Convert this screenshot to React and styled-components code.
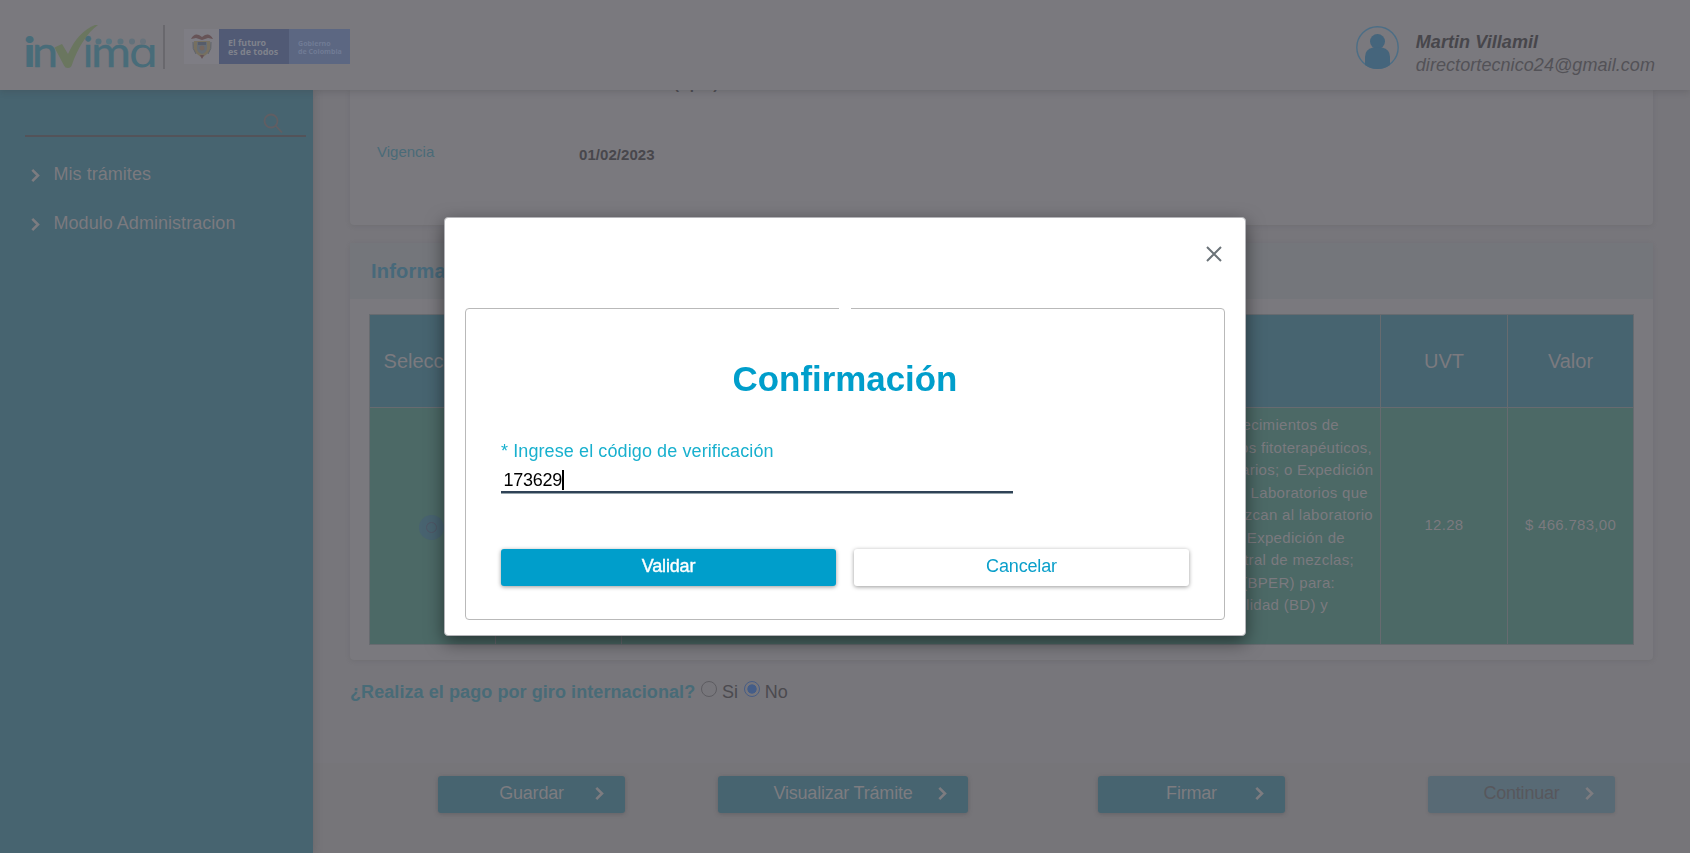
import React from "react";
import styled, { createGlobalStyle, css } from "styled-components";

const Global = createGlobalStyle`
  * { box-sizing: border-box; }
  html, body, #root { height: 100%; }
  body {
    margin: 0;
    overflow: hidden;
    background: #77767b;
    font-family: "Liberation Sans", Arial, sans-serif;
    font-size: 18px;
    color: #4b4a4f;
  }
`;

const Page = styled.div`
  height: 853px;
  display: flex;
  flex-direction: column;
`;

const Header = styled.header`
  height: 90px;
  flex: none;
  display: flex;
  justify-content: space-between;
  background: #7a797e;
  box-shadow: 0 2px 6px rgba(60, 60, 65, 0.22);
  z-index: 2;
`;

const Brand = styled.div`
  display: flex;
  align-items: flex-start;
  padding: 25px 0 0 26px;
`;

const LogoSvg = styled.svg`
  flex: none;
  margin: -15px -4px -10px;
`;

const BrandDivider = styled.div`
  width: 2px;
  height: 44px;
  margin: 0 19px 0 8px;
  background: #69686d;
`;

const GovBadge = styled.div`
  display: flex;
  height: 35px;
  margin-top: 4px;
  font-family: "Noto Sans", sans-serif;
`;

const Crest = styled.div`
  width: 35px;
  background: #7e7d84;
  display: flex;
  justify-content: center;
  padding-top: 4px;
`;

const GovText = styled.div`
  width: ${(p) => (p.$light ? 61 : 70)}px;
  padding: ${(p) => (p.$light ? "11px 0 0 9px" : "9px 0 0 9px")};
  background: ${(p) => (p.$light ? "#5c6782" : "#515a75")};
  color: ${(p) => (p.$light ? "#707b95" : "#7f828c")};
  font-size: ${(p) => (p.$light ? 7.1 : 8.9)}px;
  line-height: ${(p) => (p.$light ? 7.5 : 9)}px;
  font-weight: 700;
  white-space: nowrap;
`;

const User = styled.div`
  display: flex;
  padding: 26px 35px 0 0;
  gap: 16px;
  font-style: italic;
  color: #535257;
`;

const UserText = styled.div`
  padding-top: 5px;
  line-height: 23px;
  letter-spacing: 0.07px;
`;

const UserName = styled.div`
  font-weight: 700;
  color: #47464b;
`;

const Body = styled.div`
  flex: 1;
  min-height: 0;
  display: flex;
`;

const Sidebar = styled.aside`
  width: 313px;
  flex: none;
  background: #476470;
  padding: 20px 7px 0 25px;
  box-shadow: 2px 0 7px rgba(70, 70, 75, 0.25);
  z-index: 1;
`;

const Search = styled.div`
  height: 27px;
  border-bottom: 2px solid #535359;
  display: flex;
  justify-content: flex-end;
  padding: 3px 23px 0 0;
`;

const Nav = styled.nav`
  padding: 13px 0 0 5px;
`;

const NavItem = styled.div`
  height: 49px;
  display: flex;
  align-items: center;
  color: #7b7a7f;

  span { margin-left: 12.5px; letter-spacing: 0.04px; }
  svg { margin-top: 1px; }
`;

const Content = styled.main`
  flex: 1;
  min-width: 0;
  display: flex;
  flex-direction: column;
  background: #77767b;
`;

const Card = styled.section`
  width: 1303px;
  flex: none;
  margin-left: 37px;
  background: #7a797e;
  border-radius: 0 0 4px 4px;
  box-shadow: 0 1px 4px rgba(96, 96, 100, 0.32);
`;

const DetailCard = styled(Card)`
  height: 135px;
  padding-left: 27px;
  font-size: 15px;
`;

const ClippedRow = styled.div`
  height: 22px;
  padding-left: 203px;
  display: flex;
  justify-content: flex-start;
  overflow: hidden;

  b { margin: -15px 0 0 94px; line-height: 18px; }
`;

const DetailRow = styled.div`
  display: grid;
  grid-template-columns: 202px auto;
  padding-top: 31px;
  line-height: 18px;
  color: #4a6b78;

  b { margin-top: 3px; color: #48474c; letter-spacing: 0.06px; }
`;

const PaymentCard = styled(Card)`
  height: 417px;
  margin-top: 18px;
  border-radius: 4px;
`;

const CardTitle = styled.h2`
  margin: 0;
  height: 56px;
  padding: 16px 0 0 21px;
  background: #74767b;
  color: #47697a;
  font-size: 20px;
  line-height: 24px;
  letter-spacing: 0.2px;
`;

const Rates = styled.table`
  width: 1265px;
  margin: 15px 0 0 19px;
  border-collapse: collapse;
  table-layout: fixed;
  color: #7b7a7f;
  font-size: 15px;
  letter-spacing: 0.3px;
  text-align: center;

  th, td { border: 1px solid #676b70; }
  th {
    height: 93px;
    padding: 0;
    background: #476470;
    font-size: 20px;
    font-weight: 400;
    letter-spacing: 0;
  }
  td {
    height: 236px;
    padding: 0 0 2px;
    background: #4c6966;
    line-height: 22.5px;
  }
`;

const Concept = styled.div`
  height: 234px;
  padding: 6px 6px 0 0;
  overflow: hidden;
  display: grid;
  grid-auto-rows: 22.5px;
  justify-items: start;
`;

const ConceptLine = styled.span`
  white-space: nowrap;
  justify-self: end;
  margin-right: ${(p) => p.$end}px;
`;

const RowRadio = styled.span`
  display: flex;
  width: 25px;
  height: 25px;
  margin: 5px auto 0 49px;
  border-radius: 50%;
  background: #486370;
  align-items: center;
  justify-content: center;

  &::after {
    content: "";
    width: 9px;
    height: 9px;
    border: 1px solid #4f5666;
    border-radius: 50%;
  }
`;

const Question = styled.div`
  display: flex;
  height: 103px;
  padding: 21px 0 0 37px;
  line-height: 22px;

  b { color: #486b77; letter-spacing: 0.08px; margin-right: 5px; }
`;

const Option = styled.label`
  display: flex;
  margin-right: 5px;
`;

const Radio = styled.span`
  width: 16px;
  height: 16px;
  margin: 0 4.8px 0 0.9px;
  border-radius: 50%;
  border: 1px solid ${(p) => (p.$on ? "#475d86" : "#5d5c61")};
  background: ${(p) => (p.$on ? "radial-gradient(circle, #445d88 4.3px, transparent 5px)" : "transparent")};
`;

const Footer = styled.footer`
  flex: 1;
  display: flex;
  align-items: flex-start;
  padding: 13px 0 0 125px;
  background: #767579;
`;

const Action = styled.button`
  position: relative;
  width: ${(p) => p.$w}px;
  height: 37px;
  margin: 0 ${(p) => p.$after}px 0 0;
  padding: 0 0 2px;
  border: 0;
  border-radius: 3px;
  font: 18px "Liberation Sans", Arial, sans-serif;
  letter-spacing: -0.2px;
  color: #7d7c80;
  background: #476470;
  box-shadow: 0 1px 4px rgba(60, 60, 65, 0.35);
  ${(p) => p.$off && css`
    background: #586a75;
    color: #57575c;
    box-shadow: 0 1px 3px rgba(70, 70, 75, 0.25);
  `}

  svg { position: absolute; right: 20.5px; top: 10px; }
`;

const Overlay = styled.div`
  position: fixed;
  inset: 0;
  z-index: 10;
  display: flex;
  align-items: flex-start;
  justify-content: center;
  padding-top: 217px;
`;

const Dialog = styled.div`
  width: 802px;
  height: 419px;
  background: #fff;
  border: 1px solid #b4b4b8;
  border-radius: 4px;
  padding: 0 20px;
  box-shadow: 0 6px 18px rgba(0, 0, 0, 0.5);
`;

const DialogTop = styled.div`
  height: 82px;
  display: flex;
  justify-content: flex-end;
  padding: 28px 3.5px 0 0;
`;

const Fieldset = styled.fieldset`
  margin: 0;
  height: 320px;
  min-width: 0;
  border: 1px solid #b9b9b9;
  border-radius: 4px;
  padding: 0 35px;
`;

const Legend = styled.legend`
  width: 12px;
  height: 16px;
  margin: 0 auto;
  padding: 0;
`;

const Title = styled.h1`
  margin: 43px 0 0;
  text-align: center;
  color: #009ecb;
  font-size: 34.9px;
  line-height: 40px;
`;

const FieldLabel = styled.label`
  display: block;
  margin-top: 41px;
  line-height: 22px;
  letter-spacing: 0.1px;
  color: #18b0ce;
`;

const CodeInput = styled.div`
  display: flex;
  align-items: center;
  width: 512px;
  height: 31px;
  padding: 7px 0 0 2.5px;
  letter-spacing: -0.25px;
  border-bottom: 2px solid #2f4256;
  box-shadow: 0 1px 0 #96a4ab;
  color: #000;
`;

const Caret = styled.span`
  width: 2px;
  height: 20px;
  background: #000;
`;

const Buttons = styled.div`
  display: flex;
  gap: 18px;
  width: 688px;
  margin-top: 56px;
`;

const DialogButton = styled.button`
  width: 335px;
  height: 37px;
  padding: 0 0 2px;
  border: 0;
  border-radius: 3px;
  font: 18px "Liberation Sans", Arial, sans-serif;
  letter-spacing: -0.15px;
  color: ${(p) => (p.$primary ? "#fff" : "#0a9fca")};
  background: ${(p) => (p.$primary ? "#009ecb" : "#fff")};
  -webkit-text-stroke: ${(p) => (p.$primary ? "0.4px #fff" : "0")};
  box-shadow: 0 1px 4px rgba(0, 0, 0, 0.4);
`;

const Chevron = () => (
  <svg width="11" height="15" viewBox="0 0 11 15" fill="none">
    <path d="M2.3 1.8 8 7.5 2.3 13.2" stroke="#7d7c80" strokeWidth="2.6" />
  </svg>
);

const InvimaLogo = () => (
  <LogoSvg width="137" height="71" viewBox="-4 -15 137 71">
    <g fill="#486c79" fontFamily="Lato, sans-serif" fontSize="43">
      <text x="-2.6" y="42" fontWeight="900" fontSize="42" textLength="12" lengthAdjust="spacingAndGlyphs">i</text>
      <text x="6" y="42" fontWeight="400" stroke="#486c79" strokeWidth=".5" textLength="26" lengthAdjust="spacingAndGlyphs">n</text>
      <text x="57" y="42" fontWeight="400" stroke="#486c79" strokeWidth=".5" textLength="10" lengthAdjust="spacingAndGlyphs">i</text>
      <text x="65" y="42" fontWeight="400" stroke="#486c79" strokeWidth=".3" textLength="40" lengthAdjust="spacingAndGlyphs">m</text>
      <text x="102.500" y="42" fontFamily="DejaVu Sans, sans-serif" fontSize="41" textLength="30" lengthAdjust="spacingAndGlyphs">ɑ</text>
    </g>
    <path d="M28.5 22.5 36 19 42 29C49 14 57 5 69 0h3C61 8 52 22 45.500 41q-1 2-3.500 2-3 0-4-2.500Z" fill="#6a765f" />
    <g fill="#55707b">
      <circle cx="72.500" cy="16.500" r="3" />
      <circle cx="83" cy="16.500" r="3" fill="#587580" />
      <circle cx="94.500" cy="16.500" r="3" fill="#5c727c" />
      <circle cx="106" cy="16.500" r="3" fill="#62717b" />
      <circle cx="117" cy="16.500" r="3" fill="#68737c" />
    </g>
  </LogoSvg>
);

const CrestIcon = () => (
  <svg width="24" height="27" viewBox="0 0 24 27">
    <path d="M1 6Q4 0 9 2l3 2 3-2q5-2 8 4l-5-1-6 2-6-2Z" fill="#675457" />
    <path d="M4 8h16q2 9-3 13l-5 4-5-4Q2 17 4 8Z" fill="#777060" />
    <path d="M7 9h10v7q-1 4-5 5-4-1-5-5Z" fill="#666c74" />
    <path d="M8 9h8v3H8Z" fill="#565c6a" />
    <circle cx="12" cy="15" r="2.500" fill="#74665f" />
    <path d="M3 9q-1 7 3 12M21 9q1 7-3 12" fill="none" stroke="#5f6369" />
    <path d="m10 22 2 4 2-4Z" fill="#665257" />
  </svg>
);

const Avatar = () => (
  <svg width="44" height="44" viewBox="0 0 44 44">
    <circle cx="21.500" cy="21.500" r="20.700" fill="none" stroke="#4c6e86" strokeWidth="1.400" />
    <circle cx="21.500" cy="15.500" r="7.500" fill="#45657c" />
    <path d="M9 39v-8q0-8 8-9.500h9q8 1.500 8 9.500v8Q28.500 43 21.500 43T9 39Z" fill="#45657c" />
  </svg>
);

const conceptLines = [
  ["los establecimientos de", 35],
  ["de productos fitoterapéuticos,", 2],
  ["y cosméticos veterinarios; o Expedición", 0.5],
  ["para los Laboratorios que", 6],
  ["que pertenezcan al laboratorio", 1],
  ["o Expedición de", 29],
  ["para la central de mezclas;", 20],
  ["(BPER) para:", 39],
  ["Bioequivalencia o Biodisponibilidad (BD) y", 46],
];

const actions = [
  ["Guardar", 187, 93],
  ["Visualizar Trámite", 250, 130],
  ["Firmar", 187, 143],
  ["Continuar", 187, 0],
];

export default function App() {
  return (
    <>
      <Global />
      <Page>
        <Header>
          <Brand>
            <InvimaLogo />
            <BrandDivider />
            <GovBadge>
              <Crest><CrestIcon /></Crest>
              <GovText>El futuro<br />es de todos</GovText>
              <GovText $light>Gobierno<br />de Colombia</GovText>
            </GovBadge>
          </Brand>
          <User>
            <Avatar />
            <UserText>
              <UserName>Martin Villamil</UserName>
              directortecnico24@gmail.com
            </UserText>
          </User>
        </Header>
        <Body>
          <Sidebar>
            <Search>
              <svg width="20" height="20" viewBox="0 0 20 20" fill="none" stroke="#615e63" strokeWidth="1.8">
                <circle cx="8" cy="8" r="6.500" />
                <path d="m12.500 12.500 6.500 7" />
              </svg>
            </Search>
            <Nav>
              <NavItem><Chevron /><span>Mis trámites</span></NavItem>
              <NavItem><Chevron /><span>Modulo Administracion</span></NavItem>
            </Nav>
          </Sidebar>
          <Content>
            <DetailCard>
              <ClippedRow><b>(Apto)</b></ClippedRow>
              <DetailRow><span>Vigencia</span><b>01/02/2023</b></DetailRow>
            </DetailCard>
            <PaymentCard>
              <CardTitle>Información de pago</CardTitle>
              <Rates>
                <colgroup>
                  <col style={{ width: 126 }} />
                  <col style={{ width: 126 }} />
                  <col />
                  <col style={{ width: 127 }} />
                  <col style={{ width: 126 }} />
                </colgroup>
                <thead>
                  <tr><th>Seleccione</th><th>Código</th><th>Concepto</th><th>UVT</th><th>Valor</th></tr>
                </thead>
                <tbody>
                  <tr>
                    <td><RowRadio /></td>
                    <td />
                    <td>
                      <Concept>
                        {conceptLines.map(([text, end]) => (
                          <ConceptLine key={text} $end={end}>{text}</ConceptLine>
                        ))}
                      </Concept>
                    </td>
                    <td>12.28</td>
                    <td>$ 466.783,00</td>
                  </tr>
                </tbody>
              </Rates>
            </PaymentCard>
            <Question>
              <b>¿Realiza el pago por giro internacional?</b>
              <Option><Radio />Si</Option>
              <Option><Radio $on />No</Option>
            </Question>
            <Footer>
              {actions.map(([name, width, after]) => (
                <Action key={name} $w={width} $after={after} $off={name === "Continuar"}>
                  {name}
                  <Chevron />
                </Action>
              ))}
            </Footer>
          </Content>
        </Body>
      </Page>
      <Overlay>
        <Dialog role="dialog">
          <DialogTop>
            <svg width="16" height="16" viewBox="0 0 16 16" stroke="#6b7378" strokeWidth="2">
              <path d="m1 1 14 14M15 1 1 15" />
            </svg>
          </DialogTop>
          <Fieldset>
            <Legend />
            <Title>Confirmación</Title>
            <FieldLabel>* Ingrese el código de verificación</FieldLabel>
            <CodeInput>173629<Caret /></CodeInput>
            <Buttons>
              <DialogButton $primary>Validar</DialogButton>
              <DialogButton>Cancelar</DialogButton>
            </Buttons>
          </Fieldset>
        </Dialog>
      </Overlay>
    </>
  );
}
